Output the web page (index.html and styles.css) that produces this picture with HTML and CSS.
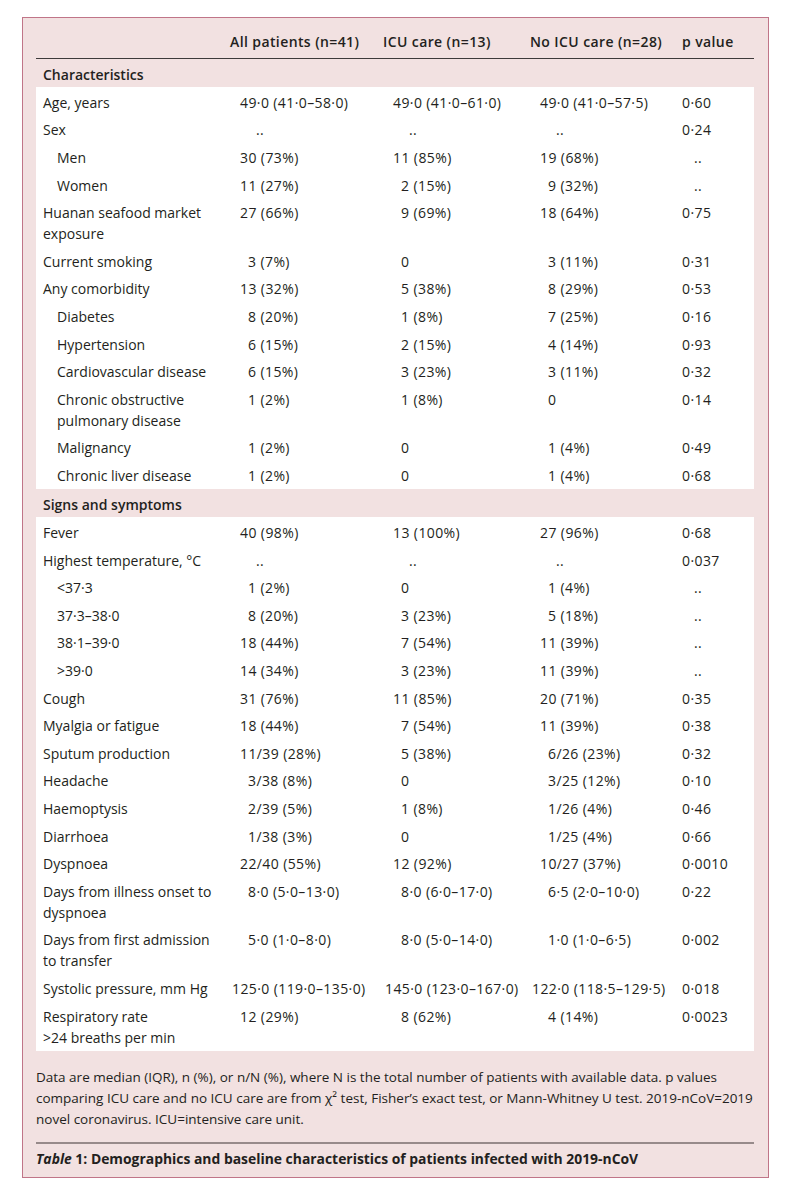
FILE: index.html
```html
<!DOCTYPE html>
<html lang="en">
<head>
<meta charset="utf-8">
<title>Table 1</title>
<link rel="stylesheet" href="styles.css">
</head>
<body>
<div class="box">
  <div class="row head">
    <div></div>
    <div class="h">All patients (n=41)</div>
    <div class="h">ICU care (n=13)</div>
    <div class="h">No ICU care (n=28)</div>
    <div class="h">p value</div>
  </div>

  <div class="band">Characteristics</div>
  <div class="section">
    <div class="row"><div class="lab">Age, years</div><div class="i1">49·0 (41·0–58·0)</div><div class="i1">49·0 (41·0–61·0)</div><div class="i1">49·0 (41·0–57·5)</div><div>0·60</div></div>
    <div class="row"><div class="lab">Sex</div><div class="i3">..</div><div class="i3">..</div><div class="i3">..</div><div>0·24</div></div>
    <div class="row"><div class="lab sub">Men</div><div class="i1">30 (73%)</div><div class="i1">11 (85%)</div><div class="i1">19 (68%)</div><div class="ip">..</div></div>
    <div class="row"><div class="lab sub">Women</div><div class="i1">11 (27%)</div><div class="i2">2 (15%)</div><div class="i2">9 (32%)</div><div class="ip">..</div></div>
    <div class="row"><div class="lab">Huanan seafood market<br>exposure</div><div class="i1">27 (66%)</div><div class="i2">9 (69%)</div><div class="i1">18 (64%)</div><div>0·75</div></div>
    <div class="row"><div class="lab">Current smoking</div><div class="i2">3 (7%)</div><div class="i2">0</div><div class="i2">3 (11%)</div><div>0·31</div></div>
    <div class="row"><div class="lab">Any comorbidity</div><div class="i1">13 (32%)</div><div class="i2">5 (38%)</div><div class="i2">8 (29%)</div><div>0·53</div></div>
    <div class="row"><div class="lab sub">Diabetes</div><div class="i2">8 (20%)</div><div class="i2">1 (8%)</div><div class="i2">7 (25%)</div><div>0·16</div></div>
    <div class="row"><div class="lab sub">Hypertension</div><div class="i2">6 (15%)</div><div class="i2">2 (15%)</div><div class="i2">4 (14%)</div><div>0·93</div></div>
    <div class="row"><div class="lab sub">Cardiovascular disease</div><div class="i2">6 (15%)</div><div class="i2">3 (23%)</div><div class="i2">3 (11%)</div><div>0·32</div></div>
    <div class="row"><div class="lab sub">Chronic obstructive<br>pulmonary disease</div><div class="i2">1 (2%)</div><div class="i2">1 (8%)</div><div class="i2">0</div><div>0·14</div></div>
    <div class="row"><div class="lab sub">Malignancy</div><div class="i2">1 (2%)</div><div class="i2">0</div><div class="i2">1 (4%)</div><div>0·49</div></div>
    <div class="row"><div class="lab sub">Chronic liver disease</div><div class="i2">1 (2%)</div><div class="i2">0</div><div class="i2">1 (4%)</div><div>0·68</div></div>
  </div>

  <div class="band">Signs and symptoms</div>
  <div class="section">
    <div class="row"><div class="lab">Fever</div><div class="i1">40 (98%)</div><div class="i1">13 (100%)</div><div class="i1">27 (96%)</div><div>0·68</div></div>
    <div class="row"><div class="lab">Highest temperature, °C</div><div class="i3">..</div><div class="i3">..</div><div class="i3">..</div><div>0·037</div></div>
    <div class="row"><div class="lab sub">&lt;37·3</div><div class="i2">1 (2%)</div><div class="i2">0</div><div class="i2">1 (4%)</div><div class="ip">..</div></div>
    <div class="row"><div class="lab sub">37·3–38·0</div><div class="i2">8 (20%)</div><div class="i2">3 (23%)</div><div class="i2">5 (18%)</div><div class="ip">..</div></div>
    <div class="row"><div class="lab sub">38·1–39·0</div><div class="i1">18 (44%)</div><div class="i2">7 (54%)</div><div class="i1">11 (39%)</div><div class="ip">..</div></div>
    <div class="row"><div class="lab sub">&gt;39·0</div><div class="i1">14 (34%)</div><div class="i2">3 (23%)</div><div class="i1">11 (39%)</div><div class="ip">..</div></div>
    <div class="row"><div class="lab">Cough</div><div class="i1">31 (76%)</div><div class="i1">11 (85%)</div><div class="i1">20 (71%)</div><div>0·35</div></div>
    <div class="row"><div class="lab">Myalgia or fatigue</div><div class="i1">18 (44%)</div><div class="i2">7 (54%)</div><div class="i1">11 (39%)</div><div>0·38</div></div>
    <div class="row"><div class="lab">Sputum production</div><div class="i1">11/39 (28%)</div><div class="i2">5 (38%)</div><div class="i2">6/26 (23%)</div><div>0·32</div></div>
    <div class="row"><div class="lab">Headache</div><div class="i2">3/38 (8%)</div><div class="i2">0</div><div class="i2">3/25 (12%)</div><div>0·10</div></div>
    <div class="row"><div class="lab">Haemoptysis</div><div class="i2">2/39 (5%)</div><div class="i2">1 (8%)</div><div class="i2">1/26 (4%)</div><div>0·46</div></div>
    <div class="row"><div class="lab">Diarrhoea</div><div class="i2">1/38 (3%)</div><div class="i2">0</div><div class="i2">1/25 (4%)</div><div>0·66</div></div>
    <div class="row"><div class="lab">Dyspnoea</div><div class="i1">22/40 (55%)</div><div class="i1">12 (92%)</div><div class="i1">10/27 (37%)</div><div>0·0010</div></div>
    <div class="row"><div class="lab">Days from illness onset to<br>dyspnoea</div><div class="i2">8·0 (5·0–13·0)</div><div class="i2">8·0 (6·0–17·0)</div><div class="i2">6·5 (2·0–10·0)</div><div>0·22</div></div>
    <div class="row"><div class="lab">Days from first admission<br>to transfer</div><div class="i2">5·0 (1·0–8·0)</div><div class="i2">8·0 (5·0–14·0)</div><div class="i2">1·0 (1·0–6·5)</div><div>0·002</div></div>
    <div class="row"><div class="lab">Systolic pressure, mm Hg</div><div>125·0 (119·0–135·0)</div><div>145·0 (123·0–167·0)</div><div>122·0 (118·5–129·5)</div><div>0·018</div></div>
    <div class="row"><div class="lab">Respiratory rate<br>&gt;24 breaths per min</div><div class="i1">12 (29%)</div><div class="i2">8 (62%)</div><div class="i2">4 (14%)</div><div>0·0023</div></div>
  </div>

  <p class="note">Data are median (IQR), n (%), or n/N (%), where N is the total number of patients with available data. p values comparing ICU care and no ICU care are from χ² test, Fisher’s exact test, or Mann-Whitney U test. 2019-nCoV=2019 novel coronavirus. ICU=intensive care unit.</p>
  <div class="rule"></div>
  <p class="caption"><em>Table</em> 1: Demographics and baseline characteristics of patients infected with 2019-nCoV</p>
</div>
</body>
</html>
```

FILE: styles.css
```css
html, body {
  margin: 0;
  padding: 0;
  background: #ffffff;
}

body {
  font-family: "Open Sans", "Noto Sans", sans-serif;
  font-size: 14px;
  color: #231f20;
}

.box {
  box-sizing: border-box;
  width: 747px;
  margin: 17px 0 0 22px;
  padding: 0 14px 0 13px;
  background: #f2e1e1;
  border: 1px solid #c07588;
}

.row {
  display: grid;
  grid-template-columns: 196px 153px 147px 150px 72px;
  line-height: 21px;
  padding: 3.3px 0;
  white-space: nowrap;
}

.row > div:not(.lab) {
  letter-spacing: 0.4px;
}

.head {
  padding: 14px 0 6px;
  line-height: 20px;
  border-bottom: 1px solid #3e3a3a;
}

.head .h {
  font-weight: 600;
  margin-left: -2px;
  letter-spacing: 0.1px;
}

.head .h:last-child {
  margin-left: 0;
}

.band {
  font-weight: 600;
  line-height: 20px;
  padding: 6px 7px 2px;
}

.section {
  background: #ffffff;
  padding: 1.5px 0 0;
}

.lab {
  padding-left: 7px;
}

.lab.sub {
  padding-left: 21px;
}

.i1 { padding-left: 8px; }
.i2 { padding-left: 16px; }
.i3 { padding-left: 24px; }
.ip { padding-left: 12px; }

.note {
  margin: 16.5px 0 0;
  font-size: 13.5px;
  line-height: 21px;
}

.rule {
  height: 2px;
  margin-top: 12px;
  background: #978a8a;
}

.caption {
  margin: 0;
  padding: 5px 0 8px;
  font-weight: 700;
  font-size: 13.9px;
  line-height: 20px;
}
```
